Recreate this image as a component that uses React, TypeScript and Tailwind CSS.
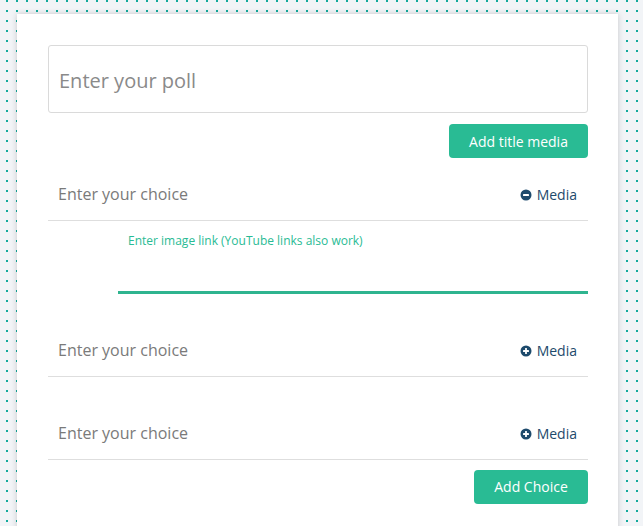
import React from "react";

const font = { fontFamily: '"Open Sans", "Noto Sans", sans-serif' };

function MediaIcon({ minus }: { minus?: boolean }) {
  return (
    <svg width="12" height="12" viewBox="0 0 12 12" className="shrink-0">
      <circle cx="6" cy="6" r="5.5" fill="#1d4a6c" />
      <rect x="3" y="5.1" width="6" height="1.8" rx="0.3" fill="#fff" />
      {!minus && <rect x="5.1" y="3" width="1.8" height="6" rx="0.3" fill="#fff" />}
    </svg>
  );
}

function ChoiceRow({ minus, top }: { minus?: boolean; top: string }) {
  return (
    <div className={`flex items-center justify-between border-b border-[#dedede] pb-[14px] pl-[10px] pr-[11px] ${top}`}>
      <span className="text-[16px] leading-[24px] text-[#7a7a7a]">Enter your choice</span>
      <span className="mt-[2px] flex items-center gap-[5px] text-[14px] leading-[20px] text-[#1d4a6c]">
        <MediaIcon minus={minus} />
        Media
      </span>
    </div>
  );
}

export default function App() {
  return (
    <div
      className="h-[526px] w-[643px] overflow-hidden bg-[#f2f4f7] bg-[radial-gradient(circle_at_7px_1px,#13a99c_1.3px,transparent_1.5px)] bg-[length:10px_10px] pl-[17px] pt-[14px]"
      style={font}
    >
      <div className="h-[540px] w-[601px] bg-white pl-[31px] pr-[30px] pt-[31px] shadow-[0_0_6px_rgba(0,0,0,0.18)]">
        <div className="flex h-[68px] items-center rounded-[3px] border border-[#dadada] pl-[10px] pt-[3px] text-[20px] text-[#8a8a8a]">
          Enter your poll
        </div>
        <div className="mt-[11px] flex justify-end">
          <button className="h-[34px] w-[139px] rounded-[4px] bg-[#29bb94] text-[14px] text-white">
            Add title media
          </button>
        </div>
        <ChoiceRow minus top="pt-[24px]" />
        <div className="ml-[70px]">
          <div className="pl-[10px] pt-[12px] text-[12px] leading-[16px] text-[#29bb94]">
            Enter image link (YouTube links also work)
          </div>
          <div className="mt-[42px] h-[3px] bg-[#2fb48f]" />
        </div>
        <ChoiceRow top="pt-[44px]" />
        <ChoiceRow top="pt-[44px]" />
        <div className="mt-[10px] flex justify-end">
          <button className="h-[34px] w-[114px] rounded-[4px] bg-[#29bb94] pb-[1px] text-[14px] text-white">
            Add Choice
          </button>
        </div>
      </div>
    </div>
  );
}
